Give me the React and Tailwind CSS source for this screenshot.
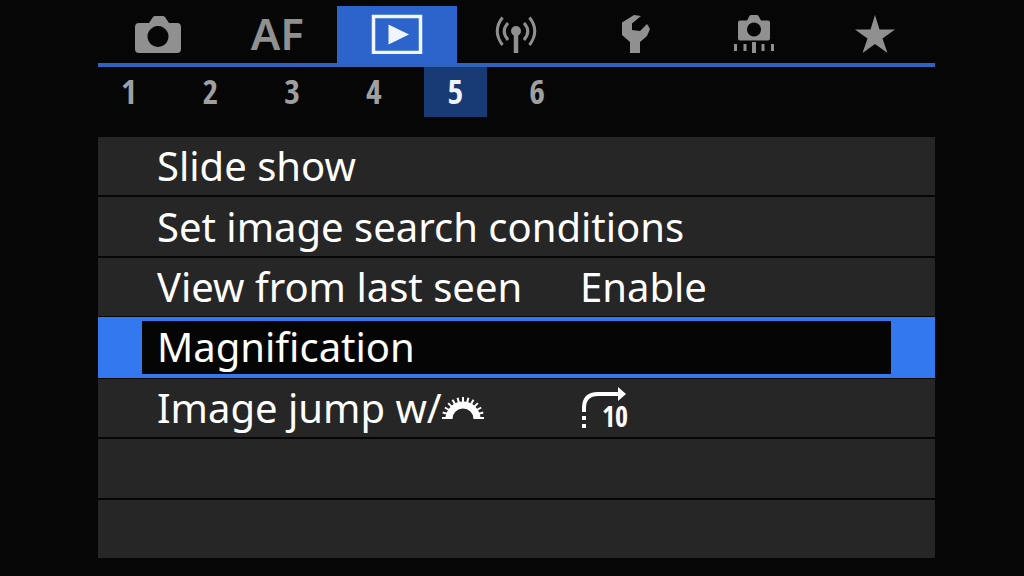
import { useState } from "react";
import clsx from "clsx";

function CameraIcon() {
  return (
    <svg width="48" height="40" viewBox="0 0 48 40" fill="currentColor">
      <path
        fillRule="evenodd"
        d="M5 9h10l4-6q1-1 2-1h8q1 0 2 1l4 6h8q4 0 4 4v22q0 4-4 4H5q-4 0-4-4V13q0-4 4-4ZM24 12a10.500 10.500 0 1 0 0.010 0Z"
      />
    </svg>
  );
}

function PlaybackIcon() {
  return (
    <svg width="52" height="40" viewBox="0 0 52 40" fill="currentColor">
      <rect x="2.500" y="2.500" width="47" height="36" fill="none" stroke="currentColor" strokeWidth="3.500" />
      <path d="M17.500 10.500 38 20.500 17.500 30.500Z" />
    </svg>
  );
}

function WirelessIcon() {
  return (
    <svg width="44" height="40" viewBox="0 0 44 40" fill="none" stroke="currentColor" strokeWidth="3">
      <path d="M8.500 3.500Q-2 17 8.500 31M14 9Q6.500 17 14 26M35.500 3.500Q46 17 35.500 31M30 9Q37.500 17 30 26" />
      <circle cx="22" cy="17" r="5" fill="currentColor" stroke="none" />
      <path d="M22 17v22" strokeWidth="4.500" />
    </svg>
  );
}

function WrenchIcon() {
  return (
    <svg width="30" height="40" viewBox="0 0 30 40" fill="currentColor">
      <path d="M13 1 20 2 11 9.500V16l8 1 7-7 3 5-3 7-7 6v11H9V28L1 21V8.500Z" />
    </svg>
  );
}

function CustomIcon() {
  return (
    <svg width="46" height="40" viewBox="0 0 46 40" fill="currentColor">
      <path
        fillRule="evenodd"
        d="M7 6.500h7l2.500-4.500q0.500-1 1.500-1h6q1 0 1.500 1l2.500 4.500h7q2 0 2 2v16q0 2-2 2H7q-2 0-2-2v-16q0-2 2-2ZM21 8.500a7 7 0 1 0 0.010 0Z"
      />
      <path d="M1 30h3v7H1ZM10.500 30h3v7h-3ZM19 28h4v11h-4ZM28.500 30h3v7h-3ZM38 30h3v7h-3Z" />
    </svg>
  );
}

function StarIcon() {
  return (
    <svg width="40" height="40" viewBox="0 0 40 40" fill="currentColor">
      <path d="M20 1 24.500 15.500H40L27.500 24.500 32.500 39 20 30 7.500 39 12.500 24.500 0 15.500H15.500Z" />
    </svg>
  );
}

function DialIcon() {
  const teeth = [-90, -75, -60, -45, -30, -15, 0, 15, 30, 45, 60, 75, 90];
  return (
    <svg width="42" height="24" viewBox="0 0 42 24" fill="currentColor">
      <path d="M3.500 23a17.500 17.500 0 0 1 35 0h-7a10.500 10.500 0 0 0-21 0Z" />
      {teeth.map((a) => (
        <rect key={a} x="20" y="1" width="2" height="6" transform={`rotate(${a} 21 22)`} />
      ))}
    </svg>
  );
}

function JumpTenIcon() {
  return (
    <svg width="56" height="52" viewBox="0 -4 56 52" fill="currentColor">
      <path d="M4 26V22Q4 8 18 8H40" fill="none" stroke="currentColor" strokeWidth="4" />
      <path d="M38 1 46 8 38 15ZM2 30h4v4H2ZM2 38h4v4H2Z" />
      <text
        x="22"
        y="41"
        fontSize="28"
        className="font-['Liberation_Sans_Narrow','Open_Sans_Condensed',sans-serif]"
      >
        10
      </text>
    </svg>
  );
}

const TABS = [
  { id: "shoot", label: "Shooting", icon: <CameraIcon /> },
  { id: "af", label: "AF" },
  { id: "play", label: "Playback", icon: <PlaybackIcon /> },
  { id: "wireless", label: "Wireless", icon: <WirelessIcon /> },
  { id: "setup", label: "Set-up", icon: <WrenchIcon /> },
  { id: "custom", label: "Custom functions", icon: <CustomIcon /> },
  { id: "my", label: "My Menu", icon: <StarIcon /> },
];

const PAGES = [1, 2, 3, 4, 5, 6];

const ITEMS = [
  { label: "Slide show" },
  { label: "Set image search conditions" },
  { label: "View from last seen", value: "Enable" },
  { label: "Magnification" },
  { label: "Image jump w/", icon: <DialIcon />, value: <JumpTenIcon /> },
];

function MenuRow({ item, selected, onSelect }) {
  return (
    <li className={clsx("flex", selected ? "-my-px bg-[#3478f0] px-11 py-1" : "bg-[#262626] px-11")}>
      <button
        onClick={onSelect}
        className={clsx(
          "flex flex-1 items-center pl-[15px] text-left text-[40px] leading-[52px] whitespace-nowrap",
          selected && "bg-[#050505]",
        )}
      >
        <span className={clsx("flex items-center", item.value && "w-[423px]")}>
          {item.label}
          {item.icon}
        </span>
        {item.value}
      </button>
    </li>
  );
}

function App() {
  const [tab, setTab] = useState("play");
  const [page, setPage] = useState(5);
  const [selected, setSelected] = useState(3);

  return (
    <main className="min-h-screen bg-[#060606] pt-1.5 pr-[89px] pb-4 pl-[98px] font-['Noto_Sans',sans-serif] text-white">
      {/* TABS */}
      <nav className="grid grid-cols-7 border-b-4 border-[#2f63c0]">
        {TABS.map((t) => (
          <button
            key={t.id}
            aria-label={t.label}
            onClick={() => setTab(t.id)}
            className={clsx(
              "flex h-[57px] items-center justify-center pb-0.5",
              tab === t.id ? "bg-[#2c64cc] text-[#f0f5ff]" : "text-[#909090]",
            )}
          >
            {t.icon ?? <span className="pb-0.5 text-[44px] leading-none font-semibold">{t.label}</span>}
          </button>
        ))}
      </nav>

      {/* PAGES */}
      <div className="-ml-2.5 grid w-[490px] grid-cols-6 justify-items-center">
        {PAGES.map((n) => (
          <button
            key={n}
            onClick={() => setPage(n)}
            className={clsx(
              "h-[50px] w-[63px] pb-0.5 text-[34px] leading-none font-bold font-['Open_Sans_Condensed','Liberation_Sans_Narrow',sans-serif]",
              page === n ? "bg-[#183b76] text-[#f0f5ff]" : "text-[#a0a0a0]",
            )}
          >
            {n}
          </button>
        ))}
      </div>

      {/* MENU */}
      <ul className="mt-5 grid min-h-[421px] grid-rows-7 gap-0.5">
        {ITEMS.map((item, i) => (
          <MenuRow
            key={item.label}
            item={item}
            selected={selected === i}
            onSelect={() => setSelected(i)}
          />
        ))}
        <li className="bg-[#262626]" />
        <li className="bg-[#262626]" />
      </ul>
    </main>
  );
}

export default App;
